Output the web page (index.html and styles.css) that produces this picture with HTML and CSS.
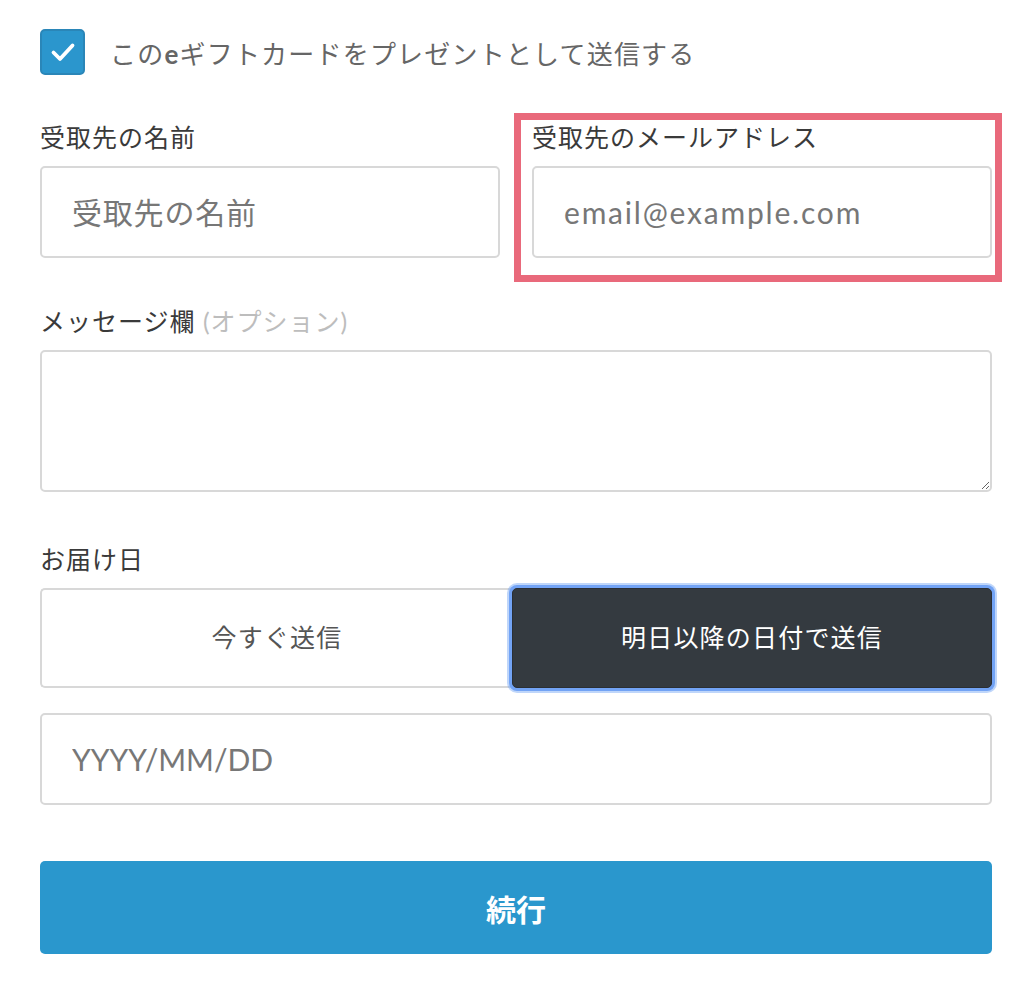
FILE: index.html
```html
<!DOCTYPE html>
<html lang="ja">
<head>
<meta charset="utf-8">
<title>eギフトカード</title>
<link rel="stylesheet" href="styles.css">
</head>
<body>
<div class="page">
  <label class="check-row">
    <span class="checkbox">
      <svg width="30" height="30" viewBox="0 0 30 30"><path d="M5.5 15.5L12 22L24.5 8.5" fill="none" stroke="#fff" stroke-width="3.8" stroke-linecap="round" stroke-linejoin="round"/></svg>
    </span>
    <span class="check-text">この<b>e</b>ギフトカードをプレゼントとして送信する</span>
  </label>

  <div class="row2">
    <div class="field">
      <div class="label">受取先の名前</div>
      <input class="input" type="text" placeholder="受取先の名前">
    </div>
    <div class="field highlight">
      <div class="label">受取先のメールアドレス</div>
      <input class="input email" type="email" placeholder="email@example.com">
    </div>
  </div>

  <div class="field msg">
    <div class="label">メッセージ欄 <span class="opt">(オプション)</span></div>
    <textarea class="textarea"></textarea>
  </div>

  <div class="field delivery">
    <div class="label">お届け日</div>
    <div class="toggle">
      <button class="tog">今すぐ送信</button>
      <button class="tog active">明日以降の日付で送信</button>
    </div>
  </div>

  <input class="input date" type="text" placeholder="YYYY/MM/DD">

  <button class="submit">続行</button>
</div>
</body>
</html>
```

FILE: styles.css
```css
* { box-sizing: border-box; }
body {
  margin: 0;
  background: #fff;
  font-family: "Lato", "Noto Sans CJK JP", sans-serif;
  color: #3a3a3a;
}
.page {
  padding: 29px 32px 0 40px;
}
.check-row {
  display: flex;
  align-items: center;
  gap: 25px;
  height: 46px;
}
.checkbox {
  width: 45px;
  height: 46px;
  border-radius: 5px;
  background: #2b96cd;
  border: 2px solid #2a86b8;
  display: flex;
  align-items: center;
  justify-content: center;
}
.check-text {
  font-size: 26px;
  color: #666;
  letter-spacing: 1.2px;
}
.check-text b { font-weight: 700; }

.row2 {
  display: grid;
  grid-template-columns: 460px 460px;
  column-gap: 32px;
  margin-top: 45px;
}
.field { position: relative; }
.label {
  font-size: 25px;
  line-height: 34px;
  letter-spacing: 1px;
  margin-bottom: 12px;
  color: #3a3a3a;
}
.opt { color: #bdbdbd; }
.highlight::after {
  content: "";
  position: absolute;
  left: -18px;
  right: -10px;
  top: -7px;
  bottom: -24px;
  border: 7px solid #e9697b;
  pointer-events: none;
}
.input {
  display: block;
  width: 100%;
  height: 92px;
  border: 2px solid #d8d8d8;
  border-radius: 5px;
  padding: 0 30px;
  font-family: "Lato", "Noto Sans CJK JP", sans-serif;
  font-size: 30px;
  letter-spacing: 0.8px;
  color: #333;
  background: #fff;
  outline: none;
}
.input::placeholder { color: #777; }
.input.email { letter-spacing: 1.8px; }
.input.date { letter-spacing: 0; }

.msg { margin-top: 46px; }
.textarea {
  display: block;
  width: 100%;
  height: 142px;
  border: 2px solid #d8d8d8;
  border-radius: 5px;
  resize: vertical;
  font-family: inherit;
  font-size: 26px;
  outline: none;
}
.delivery { margin-top: 50px; }
.toggle {
  display: grid;
  grid-template-columns: 472fr 480fr;
  height: 100px;
}
.tog {
  font-family: "Lato", "Noto Sans CJK JP", sans-serif;
  font-size: 25px;
  letter-spacing: 1.2px;
  border: 2px solid #d8d8d8;
  background: #fff;
  color: #555;
  border-radius: 5px 0 0 5px;
  border-right: none;
  padding: 0 0 4px;
}
.tog.active {
  position: relative;
  background: #343a40;
  color: #fff;
  border: 1px solid #2a2f35;
  border-radius: 5px;
  box-shadow: 0 0 0 3px #72a3f5, 0 0 0 5px rgba(114, 163, 245, 0.45);
}
.date { margin-top: 25px; }
.submit {
  display: block;
  width: 100%;
  height: 93px;
  margin-top: 56px;
  border: none;
  border-radius: 5px;
  background: #2a97cd;
  color: #fff;
  font-family: "Lato", "Noto Sans CJK JP", sans-serif;
  font-size: 30px;
  font-weight: 700;
}
```
